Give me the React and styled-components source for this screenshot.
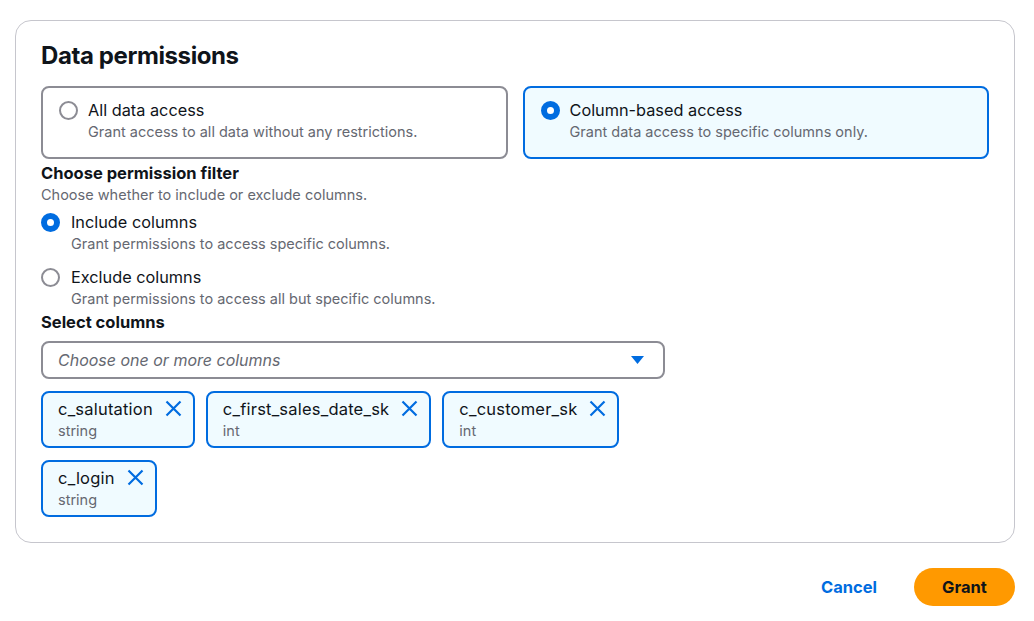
import styled, { createGlobalStyle } from 'styled-components';

const GlobalStyle = createGlobalStyle`
  body {
    margin: 0;
    padding: 20px 19px 0 15px;
    background: #ffffff;
    font-family: Inter, "Open Sans", sans-serif;
    color: #0f141a;
  }
`;

const columns = [
  { name: 'c_salutation', type: 'string' },
  { name: 'c_first_sales_date_sk', type: 'int' },
  { name: 'c_customer_sk', type: 'int' },
  { name: 'c_login', type: 'string' },
];

const CloseIcon = () => (
  <svg width="17" height="17" viewBox="0 0 17 17">
    <path d="M1.5 1.5l14 14M15.5 1.5l-14 14" stroke="#006ce0" strokeWidth="2.2" fill="none" />
  </svg>
);

const App = () => {
  return (
    <>
      <GlobalStyle />
      <Card>
        <Title>Data permissions</Title>
        <TileRow>
          <Tile>
            <Radio />
            <TextStack>
              <Label>All data access</Label>
              <Desc>Grant access to all data without any restrictions.</Desc>
            </TextStack>
          </Tile>
          <Tile $selected>
            <Radio $checked />
            <TextStack>
              <Label>Column-based access</Label>
              <Desc>Grant data access to specific columns only.</Desc>
            </TextStack>
          </Tile>
        </TileRow>

        <Field $top={3}>
          <FieldLabel>Choose permission filter</FieldLabel>
          <Desc>Choose whether to include or exclude columns.</Desc>
          <RadioGroup>
            <Option>
              <Radio $checked />
              <TextStack>
                <Label>Include columns</Label>
                <Desc>Grant permissions to access specific columns.</Desc>
              </TextStack>
            </Option>
            <Option>
              <Radio />
              <TextStack>
                <Label>Exclude columns</Label>
                <Desc>Grant permissions to access all but specific columns.</Desc>
              </TextStack>
            </Option>
          </RadioGroup>
        </Field>

        <Field $top={1}>
          <FieldLabel>Select columns</FieldLabel>
          <Select>
            <Placeholder>Choose one or more columns</Placeholder>
            <svg width="13" height="8" viewBox="0 0 13 8">
              <path d="M0 0h13L6.5 8z" fill="#006ce0" />
            </svg>
          </Select>
          <Tokens>
            {columns.map((c) => (
              <Token key={c.name}>
                <TextStack>
                  <TokenName>{c.name}</TokenName>
                  <Desc>{c.type}</Desc>
                </TextStack>
                <Dismiss>
                  <CloseIcon />
                </Dismiss>
              </Token>
            ))}
          </Tokens>
        </Field>
      </Card>
      <Actions>
        <LinkButton>Cancel</LinkButton>
        <PrimaryButton>Grant</PrimaryButton>
      </Actions>
    </>
  );
};

const Card = styled.div`
  border: 1px solid #c6c6cd;
  border-radius: 16px;
  padding: 20px 25px 25px;
  display: flex;
  flex-direction: column;
`;

const Title = styled.h2`
  margin: 0 0 15px;
  font-size: 24px;
  line-height: 30px;
  font-weight: 700;
  letter-spacing: -0.4px;
`;

const TileRow = styled.div`
  display: grid;
  grid-template-columns: 1fr 1fr;
  gap: 15px;
`;

const Tile = styled.div`
  display: flex;
  align-items: flex-start;
  gap: 10px;
  padding: 11px 16px 14px;
  border: 2px solid ${(p) => (p.$selected ? '#006ce0' : '#8c8c94')};
  background: ${(p) => (p.$selected ? '#f0fbff' : '#ffffff')};
  border-radius: 8px;
  height: 73px;
  box-sizing: border-box;
`;

const Radio = styled.span`
  flex: none;
  width: 19px;
  height: 19px;
  margin-top: 2px;
  box-sizing: border-box;
  border-radius: 50%;
  border: ${(p) => (p.$checked ? '6px solid #006ce0' : '2px solid #8c8c94')};
  background: #fff;
`;

const TextStack = styled.div`
  display: flex;
  flex-direction: column;
`;

const Label = styled.span`
  font-size: 16.3px;
  line-height: 22px;
`;

const Desc = styled.span`
  font-size: 14.5px;
  line-height: 22px;
  color: #656871;
`;

const Field = styled.div`
  display: flex;
  flex-direction: column;
  margin-top: ${(p) => p.$top}px;
`;

const FieldLabel = styled.span`
  font-size: 16.5px;
  line-height: 22px;
  font-weight: 700;
`;

const RadioGroup = styled.div`
  display: flex;
  flex-direction: column;
  gap: 11px;
  margin-top: 5px;
`;

const Option = styled.div`
  display: flex;
  gap: 11px;
`;

const Select = styled.div`
  margin-top: 8px;
  width: 624px;
  height: 38px;
  box-sizing: border-box;
  border: 2px solid #8c8c94;
  border-radius: 8px;
  display: flex;
  align-items: center;
  justify-content: space-between;
  padding: 0 19px 0 15px;
`;

const Placeholder = styled.span`
  font-size: 16px;
  font-style: italic;
  color: #656871;
`;

const Tokens = styled.div`
  margin-top: 12px;
  display: flex;
  flex-wrap: wrap;
  gap: 12px 11px;
  max-width: 640px;
`;

const Token = styled.div`
  display: flex;
  align-items: flex-start;
  gap: 12px;
  padding: 5px 11px 4px 15px;
  height: 57px;
  box-sizing: border-box;
  border: 2px solid #006ce0;
  border-radius: 8px;
  background: #f0fbff;
`;

const TokenName = styled.span`
  font-size: 16.5px;
  line-height: 22px;
  letter-spacing: 0.2px;
`;

const Dismiss = styled.span`
  display: flex;
  padding-top: 2px;
`;

const Actions = styled.div`
  display: flex;
  justify-content: flex-end;
  align-items: center;
  gap: 37px;
  margin-top: 25px;
`;

const LinkButton = styled.button`
  border: none;
  background: none;
  padding: 0;
  font-family: inherit;
  font-size: 16.5px;
  font-weight: 700;
  color: #006ce0;
`;

const PrimaryButton = styled.button`
  border: none;
  background: #ff9900;
  border-radius: 20px;
  width: 101px;
  height: 38px;
  font-family: inherit;
  font-size: 16.5px;
  font-weight: 700;
  color: #0f141a;
`;

export default App;
